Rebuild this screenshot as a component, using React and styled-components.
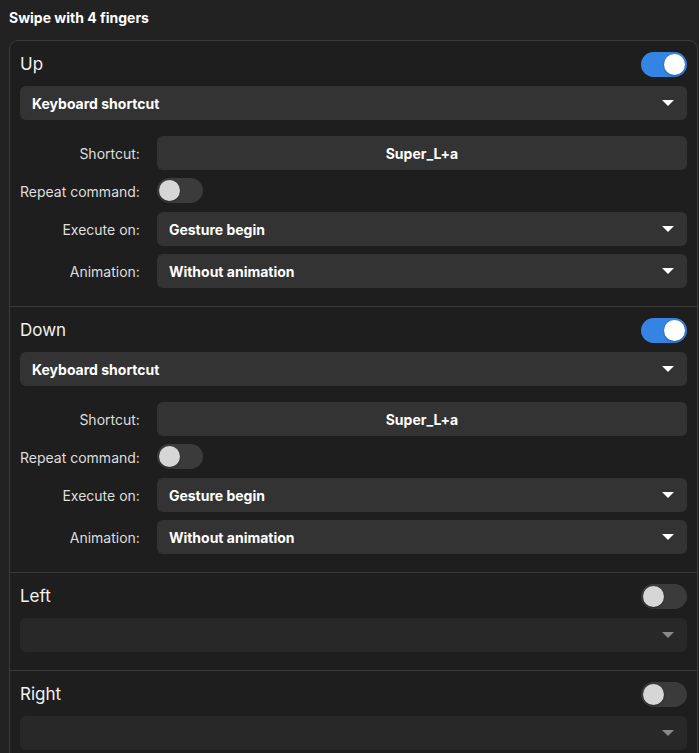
import React from 'react';
import styled, { createGlobalStyle } from 'styled-components';

const GlobalStyle = createGlobalStyle`
  html, body {
    margin: 0;
    background: #222222;
    color: #ffffff;
    font-family: Inter, "Noto Sans", "Liberation Sans", sans-serif;
    overflow: hidden;
  }
`;

const Page = styled.div`
  padding: 8px 1px 0 9px;
`;

const Title = styled.h2`
  margin: 0 0 12px;
  font-size: 14px;
  font-weight: 700;
  line-height: 20px;
`;

const Card = styled.div`
  background: #1e1e1e;
  border: 1px solid #3a3a3a;
  border-radius: 9px;
`;

const Section = styled.section`
  display: flex;
  flex-direction: column;
  padding: 11px 10px 18px;
  border-top: ${(p) => (p.$first ? 'none' : '1px solid #3a3a3a')};
`;

const Header = styled.div`
  display: flex;
  align-items: center;
  justify-content: space-between;
  height: 24px;
  margin-bottom: 10px;
`;

const Heading = styled.span`
  font-size: 17px;
  color: #f2f2f2;
`;

const Track = styled.div`
  width: 46px;
  height: 25px;
  border-radius: 13px;
  box-sizing: border-box;
  padding: 2px;
  display: flex;
  justify-content: ${(p) => (p.$on ? 'flex-end' : 'flex-start')};
  background: ${(p) => (p.$on ? '#3584e4' : '#3b3b3b')};
`;

const Knob = styled.div`
  width: 21px;
  height: 21px;
  border-radius: 50%;
  background: ${(p) => (p.$on ? '#ffffff' : '#d6d6d6')};
  box-shadow: 0 1px 2px rgba(0, 0, 0, 0.35);
`;

const Select = styled.div`
  height: 34px;
  border-radius: 6px;
  background: ${(p) => (p.$disabled ? '#282828' : '#333333')};
  display: flex;
  align-items: center;
  justify-content: space-between;
  padding: 0 12px;
  font-size: 14px;
  font-weight: 700;
  color: #ffffff;
`;

const Caret = styled.svg`
  width: 12px;
  height: 8px;
  margin-right: 1px;
`;

const Field = styled.div`
  height: 34px;
  border-radius: 6px;
  background: #333333;
  display: flex;
  align-items: center;
  justify-content: center;
  font-size: 14px;
  font-weight: 700;
`;

const Form = styled.div`
  display: grid;
  grid-template-columns: max-content 1fr;
  column-gap: 17px;
  row-gap: 8px;
  align-items: center;
  margin-top: 16px;
`;

const Label = styled.span`
  font-size: 14px;
  color: #dedede;
  text-align: right;
`;

const SwitchCell = styled.div`
  height: 26px;
`;

const Switch = ({ on }) => (
  <Track $on={on}>
    <Knob $on={on} />
  </Track>
);

const Dropdown = ({ value, disabled }) => (
  <Select $disabled={disabled}>
    <span>{value}</span>
    <Caret viewBox="0 0 12 8">
      <path d="M0 1 L12 1 L6 7 Z" fill={disabled ? '#8a8a8a' : '#ffffff'} />
    </Caret>
  </Select>
);

const directions = [
  { name: 'Up', on: true },
  { name: 'Down', on: true },
  { name: 'Left', on: false },
  { name: 'Right', on: false },
];

const App = () => (
  <Page>
    <GlobalStyle />
    <Title>Swipe with 4 fingers</Title>
    <Card>
      {directions.map((d, i) => (
        <Section key={d.name} $first={i === 0}>
          <Header>
            <Heading>{d.name}</Heading>
            <Switch on={d.on} />
          </Header>
          {d.on ? (
            <>
              <Dropdown value="Keyboard shortcut" />
              <Form>
                <Label>Shortcut:</Label>
                <Field>Super_L+a</Field>
                <Label>Repeat command:</Label>
                <SwitchCell>
                  <Switch on={false} />
                </SwitchCell>
                <Label>Execute on:</Label>
                <Dropdown value="Gesture begin" />
                <Label>Animation:</Label>
                <Dropdown value="Without animation" />
              </Form>
            </>
          ) : (
            <Dropdown value="" disabled />
          )}
        </Section>
      ))}
    </Card>
  </Page>
);

export default App;
